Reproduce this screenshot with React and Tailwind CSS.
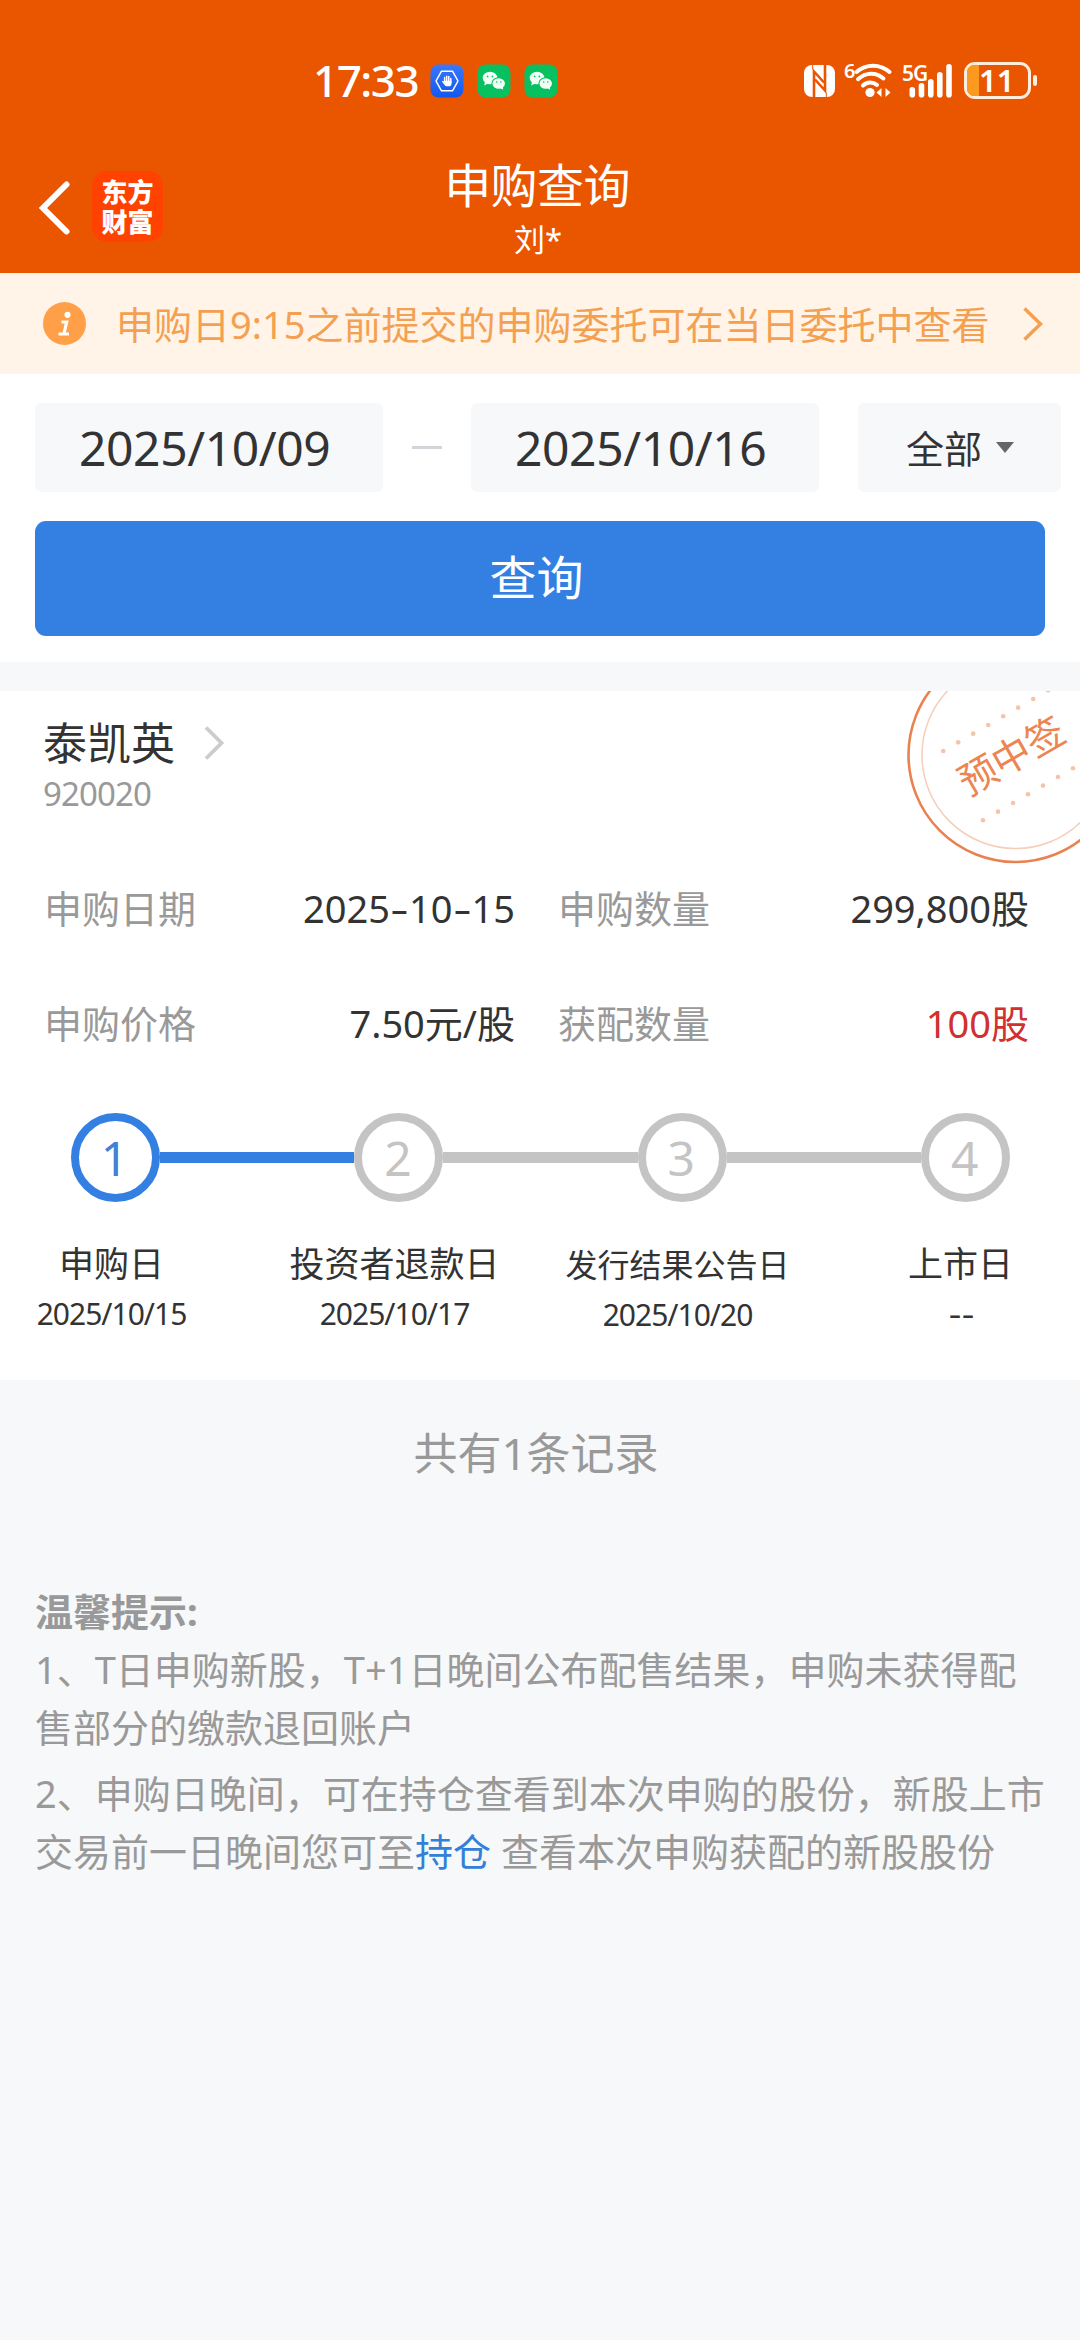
import React from 'react';

function GuardIcon() {
  return (
    <svg className="h-[34px] w-[34px]" viewBox="0 0 34 34">
      <defs>
        <linearGradient id="guard" x1="0" y1="0" x2="0" y2="1">
          <stop offset="0" stopColor="#3a78fb" />
          <stop offset="1" stopColor="#1257ee" />
        </linearGradient>
      </defs>
      <rect x="0.5" y="0.5" width="33" height="33" rx="8" fill="url(#guard)" />
      <path d="M11.5 7.2h11L28 17l-5.500 9.800h-11L6 17z" fill="none" stroke="#fff" strokeWidth="1.500" strokeLinejoin="round" />
      <path d="M14.600 18V13.600M16.700 17V12.200M18.800 17V12.600M20.800 18V14.400" stroke="#fff" strokeWidth="1.500" strokeLinecap="round" />
      <path d="M13.850 16.800h7.700v2.600c0 1.800-1 2.900-2.600 2.900h-1.800c-1.400 0-2.200-.7-2.900-1.800l-2.400-3c.5-.8 1.300-.6 2 .3z" fill="#fff" />
    </svg>
  );
}

function WeChatIcon() {
  return (
    <svg className="h-[34px] w-[34px]" viewBox="0 0 34 34">
      <rect x="0.5" y="0.5" width="33" height="33" rx="8" fill="#07c160" />
      <ellipse cx="13" cy="14" rx="7.300" ry="6.300" fill="#f2fff6" />
      <path d="M8 18l-.8 3.600 3.800-2z" fill="#f2fff6" />
      <ellipse cx="21.500" cy="19.300" rx="7" ry="6" fill="#07c160" />
      <ellipse cx="21.700" cy="19.500" rx="6.200" ry="5.300" fill="#f2fff6" />
      <path d="M23 24l3.300 1.800-.8-3.500z" fill="#f2fff6" />
      <g fill="#07c160">
        <circle cx="10.600" cy="12.400" r="0.9" />
        <circle cx="15.400" cy="12.400" r="0.9" />
        <circle cx="19.700" cy="18" r="0.8" />
        <circle cx="23.800" cy="18" r="0.8" />
      </g>
    </svg>
  );
}

function NfcIcon() {
  return (
    <svg className="h-[34px] w-[33px]" viewBox="0 0 33 34">
      <rect x="1" y="1" width="31" height="32" rx="8" fill="#fff" />
      <path d="M11 33.500V7.500L21 18.500" fill="none" stroke="#ea5500" strokeWidth="2.600" />
      <path d="M22 .5V26.500L12 15.500" fill="none" stroke="#ea5500" strokeWidth="2.600" />
      <path d="M9.700 5.500V.5M23.300 28.500v5" stroke="#ea5500" strokeWidth="1" />
    </svg>
  );
}

function WifiIcon() {
  return (
    <svg className="h-[36px] w-[38px]" viewBox="0 0 38 36">
      <g fill="none" stroke="#fff" strokeWidth="4" strokeLinecap="round">
        <path d="M2.500 9C12 .5 26 .5 35.500 9" />
        <path d="M4 16.200C12 9 22 9 29.500 15.500" />
        <path d="M9 22.500C13 18.500 19 18.500 23 22" />
      </g>
      <circle cx="16" cy="29.500" r="4.600" fill="#fff" />
      <path d="M22.500 29.500l5-4.500v9zM36.500 29.500l-5-4.500v9z" fill="#fff" />
    </svg>
  );
}

function SignalIcon() {
  return (
    <svg className="h-[34px] w-[44px]" viewBox="0 0 44 34">
      <g fill="#fff">
        <rect x="0.500" y="23" width="5.600" height="10.500" rx="2.800" />
        <rect x="9.700" y="19" width="5.600" height="14.500" rx="2.800" />
        <rect x="19" y="15" width="5.600" height="18.500" rx="2.800" />
        <rect x="28" y="8" width="5.600" height="25.500" rx="2.800" />
        <rect x="37.200" y="0" width="5.600" height="33.500" rx="2.800" />
      </g>
    </svg>
  );
}

function StatusBar() {
  return (
    <div className="flex h-[162px] items-start pr-[43px] pl-[313px] pt-[62px] text-white">
      <span className="mt-[-2px] w-[117px] text-[44px] leading-[40px] font-medium tracking-[-1.5px]">17:33</span>
      <div className="mt-[2px] flex gap-[13px]">
        <GuardIcon />
        <WeChatIcon />
        <WeChatIcon />
      </div>
      <div className="ml-auto flex items-start">
        <div className="mt-[2px]">
          <NfcIcon />
        </div>
        <span className="ml-[8px] w-[10px] text-[20px] leading-[18px] font-semibold tracking-[-1px]">6</span>
        <div className="mt-[1px]">
          <WifiIcon />
        </div>
        <div className="relative ml-[17px] mt-[2px]">
          <SignalIcon />
          <span className="absolute top-0 left-[-7px] text-[21px] leading-[18px] font-semibold tracking-[-1px]">5G</span>
        </div>
        <div className="ml-[11px] flex h-[37px] w-[67px] items-center rounded-[11px] border-[3px] border-[#ffeedd]">
          <div className="h-full w-[12px] shrink-0 rounded-l-[7px] bg-[#fb9a1e]" />
          <span className="text-[31px] leading-[31px] font-semibold">11</span>
        </div>
        <div className="mt-[13px] ml-[2px] h-[11px] w-[4px] rounded-[2px] bg-[#ffeedd]" />
      </div>
    </div>
  );
}

function Header() {
  return (
    <header className="h-[273px] bg-[#ea5500]">
      <StatusBar />
      <div className="grid h-[111px] grid-cols-[1fr_auto_1fr] items-start text-white">
        <div className="flex pl-[38px] pt-[9px]">
          <svg className="mt-[9px] h-[56px] w-[34px]" viewBox="0 0 34 56">
            <path d="M28.500 4.500L5 28l23.500 23.500" fill="none" stroke="#fff" strokeWidth="6" strokeLinecap="round" />
          </svg>
          <div className="ml-[20px] flex h-[71px] w-[71px] flex-col items-center justify-center rounded-[15px] bg-[#ff4200] pb-[2px] font-['Noto_Sans_CJK_SC',sans-serif] text-[26px] leading-[30px] font-black">
            <span>东方</span>
            <span>财富</span>
          </div>
        </div>
        <div className="flex flex-col items-center pr-[6px]">
          <h1 className="text-[47px] leading-[46px] tracking-[-0.6px]">申购查询</h1>
          <span className="mt-[14px] ml-[2px] text-[31px] leading-[34px]">刘*</span>
        </div>
      </div>
    </header>
  );
}

function Notice() {
  return (
    <div className="flex h-[101px] items-center bg-[#fff4e7] pl-[43px] text-[#f4a052]">
      <svg className="h-[43px] w-[43px]" viewBox="0 0 43 43">
        <circle cx="21.500" cy="21.500" r="21.500" fill="#ff9f48" />
        <circle cx="24.500" cy="12.800" r="3.100" fill="#fff" />
        <path d="M18.500 20h5.200l-2.700 11.500M15.500 32h10.500" fill="none" stroke="#fff" strokeWidth="3.200" />
      </svg>
      <span className="ml-[30px] w-[880px] text-[38px] leading-[44px] whitespace-nowrap">申购日9:15之前提交的申购委托可在当日委托中查看</span>
      <svg className="ml-[25px] h-[36px] w-[24px]" viewBox="0 0 24 36">
        <path d="M3.500 2.500L19.500 18l-16 15.500" fill="none" stroke="#f4a052" strokeWidth="3.500" />
      </svg>
    </div>
  );
}

function DateField({ value }) {
  return (
    <div className="flex h-[89px] w-[348px] items-center rounded-[6px] bg-[#f7f8fa] pl-[44px] pt-px text-[48px] leading-[50px] tracking-[-0.4px]">
      {value}
    </div>
  );
}

function Filters() {
  return (
    <section className="h-[288px] bg-white pl-[35px] pt-[29px]">
      <div className="flex items-center text-[#333]">
        <DateField value="2025/10/09" />
        <div className="mx-[29px] h-[3px] w-[30px] bg-[#d3d5db]" />
        <DateField value="2025/10/16" />
        <div className="ml-[39px] flex h-[89px] w-[203px] items-center rounded-[6px] bg-[#f7f8fa] pl-[48px] text-[38px] leading-[44px]">
          全部
          <svg className="ml-[14px] h-[11px] w-[18px]" viewBox="0 0 18 11">
            <path d="M0 0h18L9 11z" fill="#666" />
          </svg>
        </div>
      </div>
      <button className="mt-[29px] h-[115px] w-[1010px] rounded-[11px] bg-[#3380e2] pr-[7px] pb-[2px] text-[47px] text-white">查询</button>
    </section>
  );
}

const DOTS = [0, 1, 2, 3, 4, 5, 6, 7];

function Stamp() {
  return (
    <svg className="absolute top-0 right-0 h-[174px] w-[174px]" viewBox="906 691 174 174">
      <circle cx="1015.500" cy="755" r="107" fill="none" stroke="#ea8150" strokeWidth="2.600" />
      <circle cx="1015.500" cy="755" r="93.500" fill="none" stroke="#f6cdb9" strokeWidth="1.500" />
      {DOTS.map((i) => (
        <g key={i} fill="#f5c3a9">
          <circle cx={943.2 + 15 * i} cy={751 - 8.67 * i} r="2.300" />
          {i < 7 && <circle cx={983 + 15 * i} cy={820.3 - 8.67 * i} r="2.300" />}
        </g>
      ))}
      <text x="1011.500" y="770" transform="rotate(-30 1011.500 756)" textAnchor="middle" fontSize="38.500" fill="#ec8551">
        预中签
      </text>
    </svg>
  );
}

/* Draws hyphens wider than the text font does, keeping them as text. */
function WideHyphens({ text, className }) {
  return text.split(/(-)/).map((part, i) =>
    part === '-' ? (
      <span key={i} className={className}>
        -
      </span>
    ) : (
      part
    ),
  );
}

function Field({ label, value, red }) {
  return (
    <div className="flex items-center justify-between">
      <span className="text-[#999]">{label}</span>
      <span className={red ? 'text-[#d0302f]' : 'text-[#333]'}>
        <WideHyphens text={value} className="inline-block w-[19px] scale-x-150 text-center" />
      </span>
    </div>
  );
}

const STEPS = [
  { label: '申购日', date: '2025/10/15', active: true },
  { label: '投资者退款日', date: '2025/10/17' },
  { label: '发行结果公告日', date: '2025/10/20', small: true },
  { label: '上市日', date: '--' },
];

function Stepper() {
  return (
    <>
      <div className="mt-[61px] flex items-center pl-[71px]">
        {STEPS.map((s, i) => (
          <React.Fragment key={s.label}>
            {i > 0 && <div className={i === 1 ? 'h-[11px] w-[194.4px] bg-[#3380e2]' : 'h-[11px] w-[194.4px] bg-[#c4c4c4]'} />}
            <div
              className={
                s.active
                  ? 'flex h-[89px] w-[89px] items-center justify-center rounded-full border-[8px] border-[#3380e2] pr-[2px] text-[48px] leading-[50px] text-[#3f82d8]'
                  : 'flex h-[89px] w-[89px] items-center justify-center rounded-full border-[8px] border-[#c4c4c4] pr-[2px] text-[48px] leading-[50px] text-[#c4c4c4]'
              }
            >
              {i + 1}
            </div>
          </React.Fragment>
        ))}
      </div>
      <div className="mt-[38px] ml-[-30px] grid w-[1132px] grid-cols-4 text-center text-[#333]">
        {STEPS.map((s) => (
          <div key={s.label} className="flex flex-col items-center">
            <span className={s.small ? 'mt-[1px] h-[48px] text-[32px] leading-[48px]' : 'h-[48px] text-[35px] leading-[48px]'}>{s.label}</span>
            <span className="mt-[8px] text-[30px] leading-[36px] tracking-[-1px]">
              <WideHyphens text={s.date} className="inline-block w-[13px] scale-x-130 text-center" />
            </span>
          </div>
        ))}
      </div>
    </>
  );
}

function Record() {
  return (
    <section className="relative mt-[29px] h-[689px] overflow-hidden bg-white pt-[26px]">
      <Stamp />
      <div className="flex items-center pl-[43px]">
        <h2 className="text-[44px] leading-[52px] text-[#333]">泰凯英</h2>
        <svg className="ml-[28px] h-[36px] w-[24px]" viewBox="0 0 24 36">
          <path d="M3 2.500L18.500 18 3 33.500" fill="none" stroke="#ccc" strokeWidth="3.800" />
        </svg>
      </div>
      <div className="mt-[6px] pl-[43px] text-[33px] leading-[38px] tracking-[-0.9px] text-[#999]">920020</div>
      <div className="mt-[66px] grid grid-cols-[471px_471px] gap-x-[43px] gap-y-[57px] pl-[44px] text-[38px] leading-[58px]">
        <Field label="申购日期" value="2025-10-15" />
        <Field label="申购数量" value="299,800股" />
        <Field label="申购价格" value="7.50元/股" />
        <Field label="获配数量" value="100股" red />
      </div>
      <Stepper />
    </section>
  );
}

function Tips() {
  return (
    <section className="mt-[98px] pl-[35px] text-[38px] leading-[58px] whitespace-nowrap text-[#999]">
      <h3 className="font-bold">温馨提示:</h3>
      <p>
        1、T日申购新股，T+1日晚间公布配售结果，申购未获得配
        <br />
        售部分的缴款退回账户
      </p>
      <p className="mt-[8px]">
        2、申购日晚间，可在持仓查看到本次申购的股份，新股上市
        <br />
        交易前一日晚间您可至<a className="text-[#3380d8]">持仓</a> 查看本次申购获配的新股股份
      </p>
    </section>
  );
}

export default function App() {
  return (
    <div className="h-[2340px] w-[1080px] overflow-hidden bg-[#f6f8fa] font-['Noto_Sans','Noto_Sans_CJK_SC',sans-serif]">
      <Header />
      <Notice />
      <Filters />
      <Record />
      <p className="mt-[42px] pr-[8px] text-center text-[44px] leading-[62px] text-[#999]">共有1条记录</p>
      <Tips />
    </div>
  );
}
